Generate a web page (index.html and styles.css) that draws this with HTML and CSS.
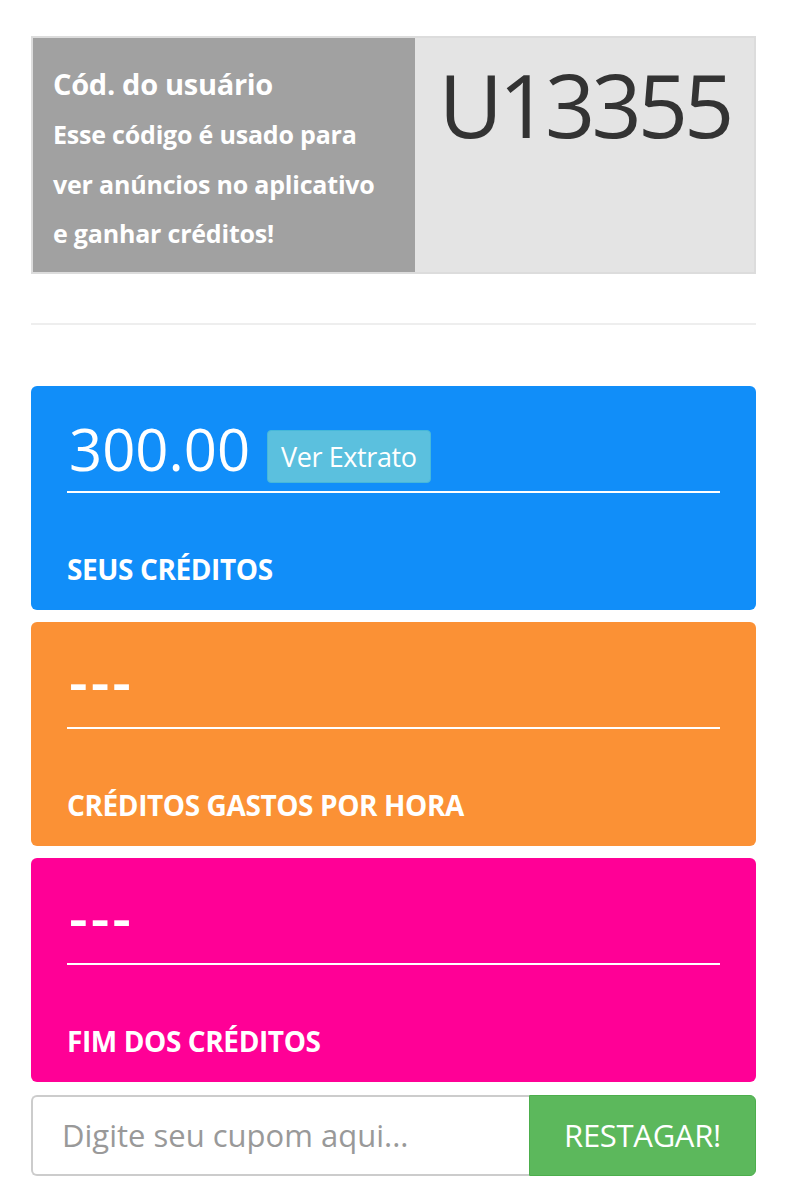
FILE: index.html
```html
<!DOCTYPE html>
<html lang="pt-BR">
<head>
<meta charset="utf-8">
<title>Créditos</title>
<link rel="stylesheet" href="styles.css">
</head>
<body>
<div class="page">
  <section class="code-box">
    <div class="code-info">
      <h3 class="code-title">Cód. do usuário</h3>
      <p class="code-desc">Esse código é usado para<br>ver anúncios no aplicativo<br>e ganhar créditos!</p>
    </div>
    <div class="code-value">U13355</div>
  </section>

  <hr class="divider">

  <section class="card card-blue">
    <div class="value-row">
      <span class="amount">300.00</span>
      <button class="btn-extrato">Ver Extrato</button>
    </div>
    <div class="label">SEUS CRÉDITOS</div>
  </section>

  <section class="card card-orange">
    <div class="value-row">
      <span class="amount dashes">---</span>
    </div>
    <div class="label">CRÉDITOS GASTOS POR HORA</div>
  </section>

  <section class="card card-pink">
    <div class="value-row">
      <span class="amount dashes">---</span>
    </div>
    <div class="label">FIM DOS CRÉDITOS</div>
  </section>

  <form class="coupon">
    <input class="coupon-input" type="text" placeholder="Digite seu cupom aqui...">
    <button class="coupon-btn" type="button">RESTAGAR!</button>
  </form>
</div>
</body>
</html>
```

FILE: styles.css
```css
* { box-sizing: border-box; }

html, body {
  margin: 0;
  padding: 0;
  background: #fff;
}

body {
  font-family: "Open Sans", "Noto Sans", sans-serif;
  color: #333;
}

.page {
  padding: 36px 30px 20px 31px;
  width: 786px;
}

/* user code box */
.code-box {
  display: grid;
  grid-template-columns: 382px 1fr;
  border: 2px solid #dcdcdc;
  background: #e4e4e4;
}

.code-info {
  background: #a1a1a1;
  color: #fff;
  padding: 23px 4px 13px 20px;
}

.code-title {
  margin: 0 0 3px;
  font-size: 29px;
  line-height: 46px;
  font-weight: 700;
  letter-spacing: -0.3px;
}

.code-desc {
  margin: 0;
  font-size: 25px;
  line-height: 49.5px;
  font-weight: 700;
  letter-spacing: -0.2px;
}

.code-value {
  text-align: center;
  font-size: 88px;
  line-height: 99px;
  padding-top: 17px;
  letter-spacing: -4px;
  color: #333;
}

.divider {
  border: 0;
  border-top: 2px solid #eeeeee;
  margin: 49px 0 61px;
}

/* stat cards */
.card {
  border-radius: 6px;
  padding: 0 36px 27px;
  color: #fff;
  margin-bottom: 12px;
}

.card-blue { background: #118ef9; }
.card-orange { background: #fb9135; }
.card-pink { background: #ff0096; }

.value-row {
  display: flex;
  align-items: flex-start;
  height: 107px;
  padding-top: 34px;
  border-bottom: 2px solid #fff;
}

.amount {
  font-size: 58px;
  line-height: 58px;
  padding-left: 2px;
}

.dashes {
  letter-spacing: 3px;
  font-weight: 600;
  margin-top: -4px;
}

.btn-extrato {
  margin: 10px 0 0 17px;
  height: 53px;
  padding: 0 13px;
  font-family: inherit;
  font-size: 27px;
  letter-spacing: -0.4px;
  color: #fff;
  background: #5bc0de;
  border: 1px solid #46b8da;
  border-radius: 4px;
}

.label {
  margin-top: 62px;
  font-size: 28px;
  line-height: 28px;
  font-weight: 700;
  letter-spacing: -0.4px;
}

/* coupon */
.coupon {
  display: flex;
  margin-top: 13px;
  height: 81px;
}

.coupon-input {
  flex: 0 0 498px;
  height: 100%;
  border: 2px solid #cccccc;
  border-right: 0;
  border-radius: 6px 0 0 6px;
  padding: 0 29px;
  font-family: inherit;
  font-size: 31px;
  color: #555;
  outline: none;
}

.coupon-input::placeholder {
  color: #999;
}

.coupon-btn {
  flex: 1;
  height: 100%;
  background: #5cb85c;
  border: 1px solid #4cae4c;
  border-radius: 0 6px 6px 0;
  color: #fff;
  font-family: inherit;
  font-size: 31px;
  letter-spacing: -0.3px;
}
```
